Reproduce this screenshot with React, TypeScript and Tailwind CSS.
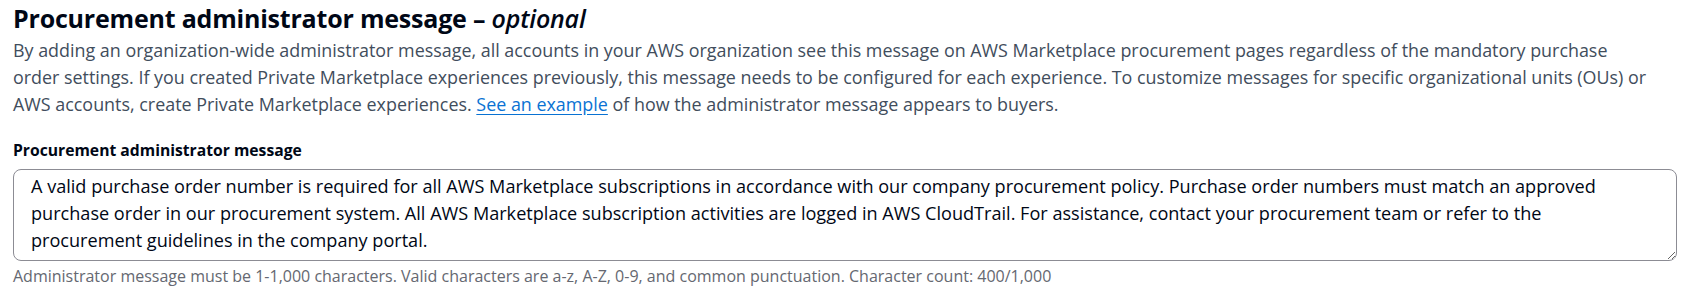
import React from "react";

const MESSAGE =
  "A valid purchase order number is required for all AWS Marketplace subscriptions in accordance with our company procurement policy. Purchase order numbers must match an approved purchase order in our procurement system. All AWS Marketplace subscription activities are logged in AWS CloudTrail. For assistance, contact your procurement team or refer to the procurement guidelines in the company portal.";

export default function App() {
  return (
    <div
      className="w-[1690px] h-[291px] bg-white px-[13px] pt-[2px] text-[#000716]"
      style={{ fontFamily: '"Open Sans", "Noto Sans", sans-serif' }}
    >
      {/* Section header */}
      <h2 className="text-[25px] leading-[32px] font-bold tracking-[-0.2px]">
        Procurement administrator message – <i className="font-semibold">optional</i>
      </h2>
      <p className="mt-[3px] max-w-[1636px] text-[17.9px] leading-[27px] text-[#414d5c]">
        By adding an organization-wide administrator message, all accounts in your AWS organization see this message on AWS
        Marketplace procurement pages regardless of the mandatory purchase order settings. If you created Private Marketplace
        experiences previously, this message needs to be configured for each experience. To customize messages for specific
        organizational units (OUs) or AWS accounts, create Private Marketplace experiences.{" "}
        <a href="#" className="text-[#0972d3] underline underline-offset-[3px]">
          See an example
        </a>{" "}
        of how the administrator message appears to buyers.
      </p>

      {/* Form field */}
      <div className="mt-[19px]">
        <label className="block text-[15.7px] leading-[27px] font-bold">Procurement administrator message</label>
        <textarea
          className="mt-[5px] block w-[1664px] h-[92px] resize border border-[#8c8c94] rounded-[8px] pl-[17px] pr-[30px] pt-[3px] text-[18.1px] leading-[27px] text-[#000716] outline-none"
          defaultValue={MESSAGE}
          readOnly
        />
        <div className="mt-[4px] text-[16px] leading-[22px] text-[#656871]">
          Administrator message must be 1-1,000 characters. Valid characters are a-z, A-Z, 0-9, and common punctuation.
          Character count: 400/1,000
        </div>
      </div>
    </div>
  );
}
